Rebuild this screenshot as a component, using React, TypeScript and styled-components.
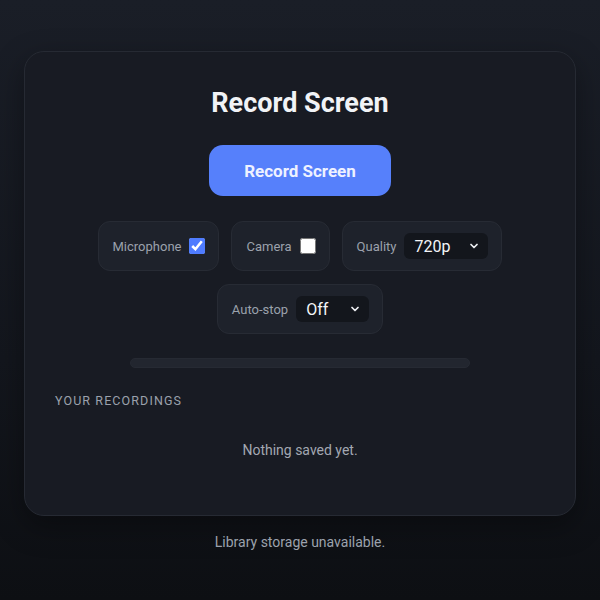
import React from 'react';
import styled, { createGlobalStyle } from 'styled-components';
import { ChevronDown } from 'lucide-react';

const GlobalStyle = createGlobalStyle`
  html, body {
    margin: 0;
    min-height: 100%;
  }
  body {
    font-family: Roboto, 'Liberation Sans', sans-serif;
    background: linear-gradient(180deg, #1a1e27 0%, #13161d 60%, #0d0f13 100%);
    min-height: 600px;
  }
`;

const Page = styled.div`
  padding: 51px 24px 40px;
  display: flex;
  flex-direction: column;
  align-items: center;
`;

const Card = styled.div`
  width: 100%;
  box-sizing: border-box;
  background: #181b23;
  border: 1px solid #262a33;
  border-radius: 20px;
  padding: 35px 30px 55px;
  display: flex;
  flex-direction: column;
  align-items: center;
  box-shadow: 0 10px 30px rgba(0, 0, 0, 0.35);
`;

const Title = styled.h1`
  margin: 0;
  font-size: 27px;
  line-height: 32px;
  font-weight: 700;
  color: #f1f3f6;
`;

const RecordButton = styled.button`
  margin-top: 26px;
  width: 182px;
  height: 51px;
  border: none;
  border-radius: 14px;
  background: #5680fb;
  color: #eef2ff;
  font-family: inherit;
  font-size: 17px;
  font-weight: 700;
  cursor: pointer;
`;

const Controls = styled.div`
  margin-top: 25px;
  display: flex;
  flex-wrap: wrap;
  justify-content: center;
  gap: 13px 12px;
  max-width: 470px;
`;

const Control = styled.label`
  height: 50px;
  box-sizing: border-box;
  display: flex;
  align-items: center;
  gap: 8px;
  padding: 0 13px 0 14px;
  background: #1e222b;
  border: 1px solid #272b34;
  border-radius: 12px;
  font-size: 13px;
  color: #9ba1ac;
`;

const Check = styled.input`
  margin: 0;
  width: 16px;
  height: 16px;
  accent-color: #4f7cff;
`;

const SelectWrap = styled.div<{ $w: number }>`
  position: relative;
  width: ${(p) => p.$w}px;
  height: 26px;
`;

const Select = styled.select`
  appearance: none;
  width: 100%;
  height: 100%;
  border: none;
  border-radius: 6px;
  background: #13161c;
  color: #f4f5f7;
  font-family: inherit;
  font-size: 16px;
  padding: 0 0 0 10px;
  outline: none;
`;

const Chevron = styled(ChevronDown)`
  position: absolute;
  right: 8px;
  top: 7px;
  pointer-events: none;
  color: #eceef2;
`;

const Progress = styled.div`
  margin-top: 24px;
  width: 340px;
  height: 10px;
  border-radius: 5px;
  background: #22262f;
  border: 1px solid #262a33;
  box-sizing: border-box;
`;

const Section = styled.div`
  margin-top: 24px;
  align-self: stretch;
  display: flex;
  flex-direction: column;
`;

const SectionLabel = styled.div`
  font-size: 12.5px;
  line-height: 17px;
  letter-spacing: 1.1px;
  color: #9ba1ac;
  text-transform: uppercase;
`;

const Empty = styled.div`
  margin-top: 31px;
  text-align: center;
  font-size: 14px;
  line-height: 20px;
  color: #a3a8b2;
`;

const Footer = styled.div`
  margin-top: 16px;
  font-size: 14px;
  line-height: 20px;
  color: #9ca2ad;
`;

const App = () => {
  return (
    <>
      <GlobalStyle />
      <Page>
        <Card>
          <Title>Record Screen</Title>
          <RecordButton>Record Screen</RecordButton>
          <Controls>
            <Control>
              Microphone
              <Check type="checkbox" defaultChecked />
            </Control>
            <Control>
              Camera
              <Check type="checkbox" />
            </Control>
            <Control>
              Quality
              <SelectWrap $w={84}>
                <Select defaultValue="720p">
                  <option>480p</option>
                  <option>720p</option>
                  <option>1080p</option>
                </Select>
                <Chevron size={12} strokeWidth={3.5} />
              </SelectWrap>
            </Control>
            <Control>
              Auto-stop
              <SelectWrap $w={73}>
                <Select defaultValue="Off">
                  <option>Off</option>
                  <option>1 min</option>
                  <option>5 min</option>
                </Select>
                <Chevron size={12} strokeWidth={3.5} />
              </SelectWrap>
            </Control>
          </Controls>
          <Progress />
          <Section>
            <SectionLabel>Your recordings</SectionLabel>
            <Empty>Nothing saved yet.</Empty>
          </Section>
        </Card>
        <Footer>Library storage unavailable.</Footer>
      </Page>
    </>
  );
};

export default App;
